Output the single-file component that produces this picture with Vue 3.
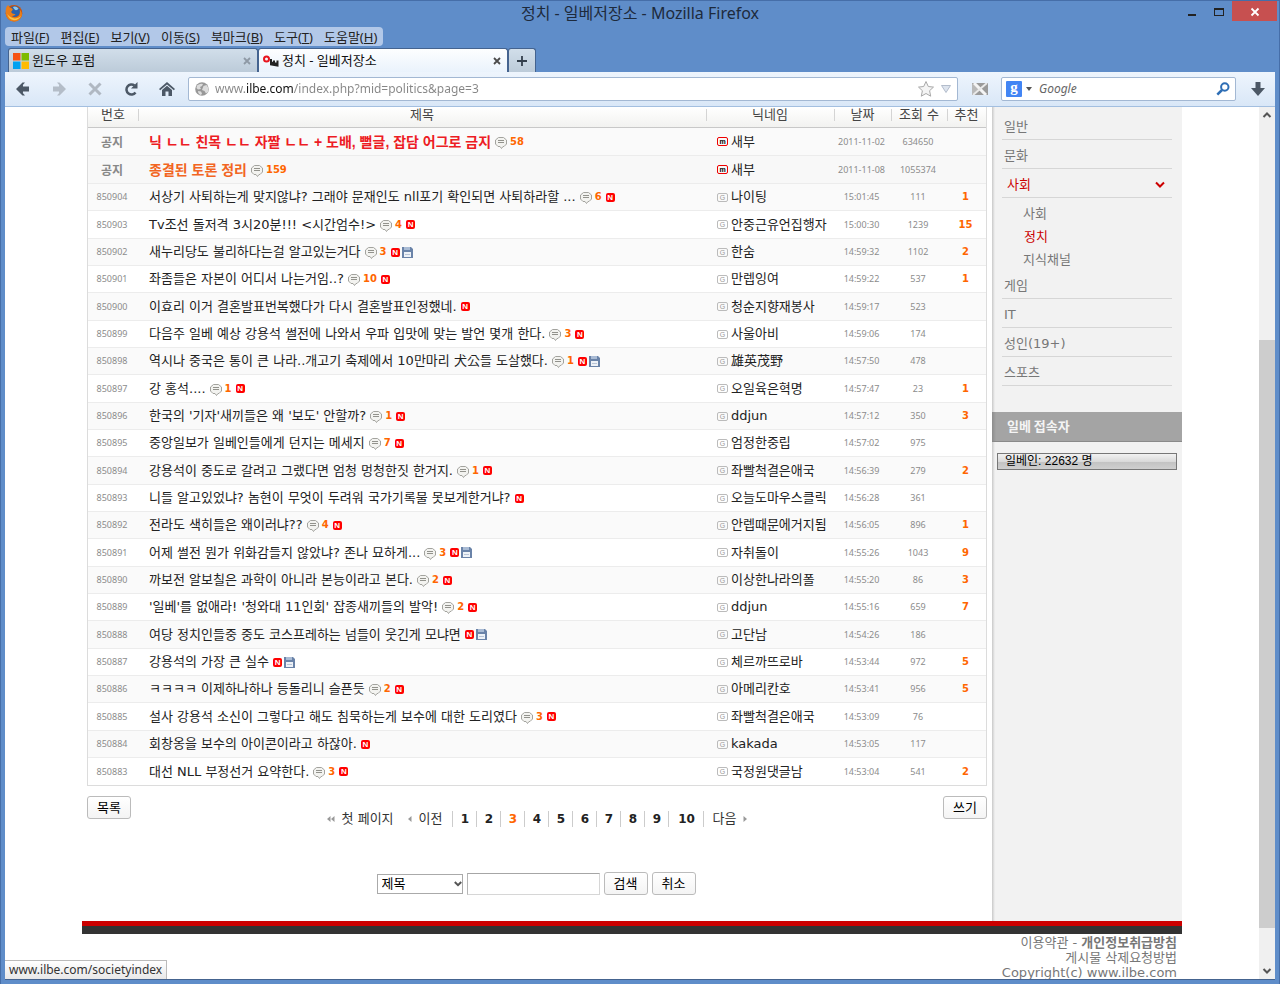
<script setup>
import { ref } from 'vue'

const menus = [
  ['파일', 'F'], ['편집', 'E'], ['보기', 'V'], ['이동', 'S'],
  ['북마크', 'B'], ['도구', 'T'], ['도움말', 'H'],
]
const address = ref('www.ilbe.com/index.php?mid=politics&page=3')

const posts = [
  { no: '공지', tone: 'red', title: '닉 ㄴㄴ 친목 ㄴㄴ 자짤 ㄴㄴ + 도배, 뻘글, 잡담 어그로 금지', comments: 58, nick: '새부', date: '2011-11-02', views: 634650 },
  { no: '공지', tone: 'orange', title: '종결된 토론 정리', comments: 159, nick: '새부', date: '2011-11-08', views: 1055374 },
  { no: 850904, title: '서상기 사퇴하는게 맞지않냐? 그래야 문재인도 nll포기 확인되면 사퇴하라할 ...', comments: 6, isNew: true, nick: '나이팅', date: '15:01:45', views: 111, votes: 1 },
  { no: 850903, title: 'Tv조선 돌저격 3시20분!!! <시간엄수!>', comments: 4, isNew: true, nick: '안중근유언집행자', date: '15:00:30', views: 1239, votes: 15 },
  { no: 850902, title: '새누리당도 불리하다는걸 알고있는거다', comments: 3, isNew: true, file: true, nick: '한숨', date: '14:59:32', views: 1102, votes: 2 },
  { no: 850901, title: '좌좀들은 자본이 어디서 나는거임..?', comments: 10, isNew: true, nick: '만렙잉여', date: '14:59:22', views: 537, votes: 1 },
  { no: 850900, title: '이효리 이거 결혼발표번복했다가 다시 결혼발표인정했네.', isNew: true, nick: '청순지향재봉사', date: '14:59:17', views: 523 },
  { no: 850899, title: '다음주 일베 예상 강용석 썰전에 나와서 우파 입맛에 맞는 발언 몇개 한다.', comments: 3, isNew: true, nick: '사울아비', date: '14:59:06', views: 174 },
  { no: 850898, title: '역시나 중국은 통이 큰 나라..개고기 축제에서 10만마리 犬公들 도살했다.', comments: 1, isNew: true, file: true, nick: '雄英茂野', date: '14:57:50', views: 478 },
  { no: 850897, title: '강 홍석....', comments: 1, isNew: true, nick: '오일육은혁명', date: '14:57:47', views: 23, votes: 1 },
  { no: 850896, title: "한국의 '기자'새끼들은 왜 '보도' 안할까?", comments: 1, isNew: true, nick: 'ddjun', date: '14:57:12', views: 350, votes: 3 },
  { no: 850895, title: '중앙일보가 일베인들에게 던지는 메세지', comments: 7, isNew: true, nick: '엄정한중립', date: '14:57:02', views: 975 },
  { no: 850894, title: '강용석이 중도로 갈려고 그랬다면 엄청 멍청한짓 한거지.', comments: 1, isNew: true, nick: '좌빨척결은애국', date: '14:56:39', views: 279, votes: 2 },
  { no: 850893, title: '니들 알고있었냐? 놈현이 무엇이 두려워 국가기록물 못보게한거냐?', isNew: true, nick: '오늘도마우스클릭', date: '14:56:28', views: 361 },
  { no: 850892, title: '전라도 색히들은 왜이러냐??', comments: 4, isNew: true, nick: '안렙때문에거지됨', date: '14:56:05', views: 896, votes: 1 },
  { no: 850891, title: '어제 썰전 뭔가 위화감들지 않았냐? 존나 묘하게...', comments: 3, isNew: true, file: true, nick: '자취돌이', date: '14:55:26', views: 1043, votes: 9 },
  { no: 850890, title: '까보전 알보칠은 과학이 아니라 본능이라고 본다.', comments: 2, isNew: true, nick: '이상한나라의폴', date: '14:55:20', views: 86, votes: 3 },
  { no: 850889, title: "'일베'를 없애라! '청와대 11인회' 잡종새끼들의 발악!", comments: 2, isNew: true, nick: 'ddjun', date: '14:55:16', views: 659, votes: 7 },
  { no: 850888, title: '여당 정치인들중 중도 코스프레하는 넘들이 웃긴게 모냐면', isNew: true, file: true, nick: '고단남', date: '14:54:26', views: 186 },
  { no: 850887, title: '강용석의 가장 큰 실수', isNew: true, file: true, nick: '체르까뜨로바', date: '14:53:44', views: 972, votes: 5 },
  { no: 850886, title: 'ㅋㅋㅋㅋ 이제하나하나 등돌리니 슬픈듯', comments: 2, isNew: true, nick: '아메리칸호', date: '14:53:41', views: 956, votes: 5 },
  { no: 850885, title: '설사 강용석 소신이 그렇다고 해도 침묵하는게 보수에 대한 도리였다', comments: 3, isNew: true, nick: '좌빨척결은애국', date: '14:53:09', views: 76 },
  { no: 850884, title: '회창옹을 보수의 아이콘이라고 하잖아.', isNew: true, nick: 'kakada', date: '14:53:05', views: 117 },
  { no: 850883, title: '대선 NLL 부정선거 요약한다.', comments: 3, isNew: true, nick: '국정원댓글남', date: '14:53:04', views: 541, votes: 2 },
]

const categories = [
  { name: '일반' },
  { name: '문화' },
  { name: '사회', open: true, children: ['사회', '정치', '지식채널'] },
  { name: '게임' },
  { name: 'IT' },
  { name: '성인(19+)' },
  { name: '스포츠' },
]
const pages = [1, 2, 3, 4, 5, 6, 7, 8, 9, 10]
const field = ref('제목')
const keyword = ref('')
</script>

<template>
  <div class="window">
    <header class="titlebar">
      <svg class="fox" viewBox="0 0 16 16" aria-hidden="true">
        <circle cx="8" cy="8.2" r="7.4" fill="#c9520c" />
        <circle cx="8.6" cy="6.6" r="4.9" fill="#2a62ac" />
        <path d="M7 2.6 Q10 1.6 12 4 Q11 6 9 5.4 Q8 4.4 7 2.6Z" fill="#8ec8ee" />
        <path d="M1 3.4 Q1.6 1.2 3 .8 Q3.2 2.6 4.6 3.4 Q6.4 3.6 7 4.8 Q6 6.4 5.4 7.2 Q6.6 9.4 9.4 8.8 Q8.4 11 5.8 10.6 Q8.8 13 12 10.6 Q13.8 8.6 13 5 Q15.6 7 15 10.4 Q13 15.6 8 15.6 Q1.6 15 .8 9 Q.4 5.6 1 3.4Z" fill="#ea7d18" />
        <path d="M2 8.6 Q3 13.6 8 14.4 Q12.4 14.2 14.2 10.6 Q11.4 13.4 7.6 12.6 Q3.6 11.6 2 8.6Z" fill="#fbc544" />
      </svg>
      <h1 class="window-title">정치 - 일베저장소 - Mozilla Firefox</h1>
      <div class="window-controls">
        <button class="win-btn" type="button" aria-label="최소화">
          <svg width="10" height="10" viewBox="0 0 10 10"><path d="M1 7h8v2H1z" fill="#222" /></svg>
        </button>
        <button class="win-btn" type="button" aria-label="최대화">
          <svg width="10" height="10" viewBox="0 0 10 10"><path d="M0 1h10v8H0zM1 3v5h8V3z" fill="#222" fill-rule="evenodd" /></svg>
        </button>
        <button class="win-btn close" type="button" aria-label="닫기">
          <svg width="10" height="10" viewBox="0 0 10 10"><path d="M1.500 1.500l7 7M8.500 1.500l-7 7" stroke="#fff" stroke-width="1.8" /></svg>
        </button>
      </div>
    </header>

    <nav class="menubar">
      <button v-for="m in menus" :key="m[1]" type="button">{{ m[0] }}(<u>{{ m[1] }}</u>)</button>
    </nav>

    <div class="tabs">
      <div class="tab">
        <svg width="16" height="16" viewBox="0 0 16 16" aria-hidden="true">
          <path d="M0 0h7.500v7.500H0z" fill="#f65314" /><path d="M8.500 0H16v7.500H8.500z" fill="#7cbb00" />
          <path d="M0 8.500h7.500V16H0z" fill="#00a1f1" /><path d="M8.500 8.500H16V16H8.500z" fill="#ffbb00" />
        </svg>
        <button class="tab-name" type="button">윈도우 포럼</button>
        <button class="tab-close faint" type="button" aria-label="탭 닫기">
          <svg width="8" height="8" viewBox="0 0 8 8"><path d="M1 1l6 6M7 1L1 7" stroke="currentColor" stroke-width="1.8" /></svg>
        </button>
      </div>
      <div class="tab active">
        <svg width="16" height="16" viewBox="0 0 16 16" aria-hidden="true">
          <circle cx="3.500" cy="6" r="2.500" fill="none" stroke="#e8141e" stroke-width="2" />
          <path d="M8 6v5.500l6.500 1V7.500M11 7.500v3.500M8 9.500l6 1" fill="none" stroke="#222" stroke-width="2" />
        </svg>
        <button class="tab-name" type="button">정치 - 일베저장소</button>
        <button class="tab-close" type="button" aria-label="탭 닫기">
          <svg width="8" height="8" viewBox="0 0 8 8"><path d="M1 1l6 6M7 1L1 7" stroke="currentColor" stroke-width="1.8" /></svg>
        </button>
      </div>
      <button class="new-tab" type="button" aria-label="새 탭">
        <svg width="10" height="10" viewBox="0 0 10 10"><path d="M5 0v10M0 5h10" stroke="#333f4c" stroke-width="1.8" /></svg>
      </button>
    </div>

    <div class="toolbar">
      <button class="tool" type="button" aria-label="뒤로">
        <svg width="14" height="14" viewBox="0 0 14 14"><path d="M0 7l6.500-6.500H9L5.500 4.500H13v5H5.500L9 13.500H6.500z" fill="#4c5866" /><path d="M2 7l5-4.500v9z" fill="#4c5866" /></svg>
      </button>
      <button class="tool" type="button" aria-label="앞으로">
        <svg width="14" height="14" viewBox="0 0 14 14"><path d="M14 7L7.500.5H5l3.500 4H1v5h7.500l-3.500 4h2.500z" fill="#b4bdc8" /><path d="M12 7L7 2.500v9z" fill="#b4bdc8" /></svg>
      </button>
      <button class="tool" type="button" aria-label="중지">
        <svg width="14" height="14" viewBox="0 0 14 14"><path d="M1.500 1.500l11 11M12.500 1.500l-11 11" stroke="#b0b8c2" stroke-width="3" /></svg>
      </button>
      <button class="tool" type="button" aria-label="새로 고침">
        <svg width="14" height="14" viewBox="0 0 14 14"><path d="M11.500 10.500A5 5 0 1 1 10.500 3.500" fill="none" stroke="#4c5866" stroke-width="2.500" /><path d="M13.500 0v6.500H7z" fill="#4c5866" /></svg>
      </button>
      <button class="tool" type="button" aria-label="홈">
        <svg width="16" height="14" viewBox="0 0 16 14"><path d="M8 0l8 7-1.200 1.300L8 2.500 1.200 8.300 0 7z" fill="#4c5866" /><path d="M3 8l5-4.200L13 8v6H9.500V9.500h-3V14H3z" fill="#4c5866" /></svg>
      </button>
      <div class="url-box">
        <svg width="14" height="14" viewBox="0 0 14 14" aria-hidden="true">
          <circle cx="7" cy="7" r="6.800" fill="#989898" />
          <path d="M2 3.500Q5 1 8 2L7 4 5 5 6 7 3 7.500 1.500 6zM8.500 4l3-1 2 3-.5 4-2 1.500L9.500 9 7 8zM3 9l3 .5 1 2-1 1.500Q3 12 3 9z" fill="#dcdcdc" />
        </svg>
        <input id="address" v-model="address" class="address" type="text" aria-label="주소">
        <svg width="18" height="18" viewBox="0 0 18 18" aria-hidden="true">
          <path d="M9 1.500l2.300 5 5.200.6-3.900 3.600 1.100 5.500L9 13.500l-4.700 2.700 1.100-5.500L1.500 7.100l5.200-.6z" fill="#f4f4f4" stroke="#a9a9a9" />
        </svg>
        <svg width="10" height="8" viewBox="0 0 10 8" aria-hidden="true"><path d="M.5.500h9L5 7.500z" fill="#dde4ee" stroke="#b3bccb" /></svg>
      </div>
      <button class="tool addon" type="button" aria-label="부가 기능">
        <svg width="16" height="12" viewBox="0 0 16 12"><path d="M0 0h16v12H0z" fill="#9a9a9a" /><path d="M0 0l7 6-7 6z" fill="#b9b9b9" /><path d="M2 0L14 12" stroke="#f4f4f4" stroke-width="3" /><path d="M15 0L1 12" stroke="#e9e9e9" stroke-width="2" /></svg>
      </button>
      <div class="search-box">
        <span class="google">g</span>
        <svg width="6" height="4" viewBox="0 0 6 4" aria-hidden="true"><path d="M0 0h6L3 4z" fill="#555" /></svg>
        <input class="search-input" type="text" placeholder="Google" aria-label="Google">
        <svg width="14" height="14" viewBox="0 0 14 14" aria-hidden="true"><circle cx="8.800" cy="5" r="3.700" fill="none" stroke="#2e6eb5" stroke-width="2" /><path d="M6 8l-4.700 4.700" stroke="#2e6eb5" stroke-width="2.500" /></svg>
      </div>
      <button class="tool down" type="button" aria-label="다운로드">
        <svg width="14" height="14" viewBox="0 0 14 14"><path d="M4.500 0h5v6H14l-7 8-7-8h4.500z" fill="#4c5866" /></svg>
      </button>
    </div>

    <div class="viewport">
      <div class="page">
        <div class="site">
          <div class="columns">
            <main class="board">
              <table class="posts">
                <thead>
                  <tr>
                    <th class="c-no">번호</th>
                    <th>제목</th>
                    <th class="c-nick">닉네임</th>
                    <th class="c-date">날짜</th>
                    <th class="c-views">조회 수</th>
                    <th class="c-votes">추천</th>
                  </tr>
                </thead>
                <tbody>
                  <tr v-for="(p, i) in posts" :key="i" :class="{ notice: p.tone }">
                    <td class="no">{{ p.no }}</td>
                    <td>
                      <div class="subject">
                        <a href="#" class="title" :class="p.tone">{{ p.title }}</a>
                        <template v-if="p.comments">
                          <svg class="bubble" width="12" height="12" viewBox="0 0 12 12" aria-hidden="true">
                            <path d="M3.500.500h5l3 2.500v4L9 9.500H8L6.500 11.500 5 9.500H3L.500 7V3z" fill="#f3f3f0" stroke="#a3a39e" />
                            <path d="M3 3.500h6M3 5.500h6" stroke="#92928c" />
                          </svg>
                          <b class="count">{{ p.comments }}</b>
                        </template>
                        <span v-if="p.isNew" class="new">N</span>
                        <svg v-if="p.file" class="disk" width="11" height="11" viewBox="0 0 11 11" aria-hidden="true">
                          <path d="M0 0h9l2 2v9H0z" fill="#6a83a8" /><path d="M2 0h6v3H2z" fill="#a9bbd4" /><path d="M2 5h7v5H2z" fill="#eef2f7" /><path d="M3 7h5v1H3z" fill="#b8c4d6" />
                        </svg>
                      </div>
                    </td>
                    <td>
                      <div class="nick">
                        <span class="badge" :class="{ staff: p.tone }">{{ p.tone ? 'm' : 'G' }}</span>
                        <a href="#">{{ p.nick }}</a>
                      </div>
                    </td>
                    <td class="num">{{ p.date }}</td>
                    <td class="num">{{ p.views }}</td>
                    <td class="votes">{{ p.votes }}</td>
                  </tr>
                </tbody>
              </table>

              <div class="under">
                <button class="btn" type="button">목록</button>
                <nav class="pager">
                  <a href="#" class="edge"><svg width="8" height="6" viewBox="0 0 8 6"><path d="M3.500 0v6L0 3zM7.500 0v6L4 3z" fill="#999" /></svg>첫 페이지</a>
                  <a href="#" class="edge prev"><svg width="4" height="6" viewBox="0 0 4 6"><path d="M3.500 0v6L0 3z" fill="#999" /></svg>이전</a>
                  <a v-for="n in pages" :key="n" href="#" class="page-no" :class="{ current: n === 3 }">{{ n }}</a>
                  <a href="#" class="edge next">다음<svg width="4" height="6" viewBox="0 0 4 6"><path d="M.5 0v6L4 3z" fill="#999" /></svg></a>
                </nav>
                <button class="btn" type="button">쓰기</button>
              </div>

              <form class="find" @submit.prevent>
                <span class="select-wrap">
                  <select v-model="field" aria-label="검색 대상">
                    <option>제목</option>
                    <option>내용</option>
                  </select>
                  <svg width="8" height="6" viewBox="0 0 8 6" aria-hidden="true"><path d="M.8 1L4 4.200 7.200 1" fill="none" stroke="#555" stroke-width="2" /></svg>
                </span>
                <input v-model="keyword" class="keyword" type="text" aria-label="검색어">
                <button class="btn" type="submit">검색</button>
                <button class="btn" type="button">취소</button>
              </form>
            </main>

            <aside class="side">
              <ul class="cats">
                <li v-for="c in categories" :key="c.name">
                  <a href="#" class="cat" :class="{ open: c.open }">
                    {{ c.name }}
                    <svg v-if="c.open" width="10" height="8" viewBox="0 0 10 8" aria-hidden="true"><path d="M1 1.500L5 5.500 9 1.500" fill="none" stroke="#c00" stroke-width="2" /></svg>
                  </a>
                  <ul v-if="c.children" class="subs">
                    <li v-for="s in c.children" :key="s"><a href="#" :class="{ here: s === '정치' }">{{ s }}</a></li>
                  </ul>
                </li>
              </ul>
              <h2 class="side-title">일베 접속자</h2>
              <div class="online">일베인: 22632 명</div>
            </aside>
          </div>

          <footer class="foot">
            <p><a href="#">이용약관</a> - <a href="#"><b>개인정보취급방침</b></a></p>
            <p><a href="#">게시물 삭제요청방법</a></p>
            <p>Copyright(c) www.ilbe.com</p>
          </footer>
        </div>
        <div class="status">www.ilbe.com/societyindex</div>
      </div>

      <div class="scrollbar" aria-hidden="true">
        <svg width="16" height="16" viewBox="0 0 16 16"><path d="M4.500 10L8 6.500l3.500 3.500" fill="none" stroke="#555" stroke-width="2" /></svg>
        <div class="track"><div class="thumb"></div></div>
        <svg width="16" height="16" viewBox="0 0 16 16"><path d="M4.500 6L8 9.500 11.500 6" fill="none" stroke="#555" stroke-width="2" /></svg>
      </div>
    </div>
  </div>
</template>

<style>
body {
  margin: 0;
  background: #5f8dc9;
}
</style>

<style scoped>
* {
  box-sizing: border-box;
}

.window {
  display: flex;
  flex-direction: column;
  height: 100vh;
  padding: 0 4px 4px;
  border: 1px solid #466ea8;
  border-width: 1px 1px 0;
  background: #5f8dc9;
  font: 13px/16px "DejaVu Sans", "Noto Sans CJK KR", sans-serif;
  color: #222;
}

button {
  margin: 0;
  padding: 0;
  border: 0;
  background: none;
  color: inherit;
  font: inherit;
}

a {
  color: inherit;
  text-decoration: none;
}

ul, p, h1, h2 {
  margin: 0;
  padding: 0;
  list-style: none;
}

svg {
  display: block;
  flex: none;
}

.titlebar, .menubar, .tabs, .toolbar, .status {
  flex: none;
  font-family: "Noto Sans", "Noto Sans CJK KR", sans-serif;
}

/* Title bar */
.titlebar {
  display: grid;
  grid-template-columns: 1fr auto 1fr;
  height: 26px;
}

.fox {
  width: 18px;
  height: 18px;
  margin-top: 3px;
}

.window-title {
  font-size: 16px;
  font-weight: 400;
  line-height: 24px;
  color: #1d2a3c;
}

.window-controls {
  display: flex;
  justify-content: flex-end;
  height: 20px;
  margin-right: -2px;
}

.win-btn {
  display: flex;
  align-items: center;
  justify-content: center;
  width: 27px;
  padding-top: 1px;
}

.win-btn.close {
  width: 45px;
  background: #c75050;
}

/* Menu bar */
.menubar {
  display: flex;
  align-self: flex-start;
  gap: 11px;
  height: 19px;
  margin-bottom: 2px;
  padding: 0 6px;
  border-radius: 4px;
  background: #b2c8e8;
  line-height: 18px;
}

/* Tabs */
.tabs {
  display: flex;
  height: 24px;
  padding-left: 3px;
}

.tab {
  display: flex;
  align-items: center;
  gap: 3px;
  flex: 0 1 250px;
  padding: 0 6px 0 4px;
  border: 1px solid #44638f;
  border-bottom: 0;
  border-radius: 3px 3px 0 0;
  background: linear-gradient(#d1deea, #bccbd9);
}

.tab.active {
  background: linear-gradient(#fdfeff, #eaf3fc);
}

.tab-name {
  flex: 1;
  text-align: left;
  line-height: 18px;
  padding-bottom: 2px;
  color: #111;
}

.tab-close {
  color: #4b4b4b;
}

.tab-close.faint {
  color: #8e99a5;
}

.new-tab {
  display: flex;
  align-items: center;
  justify-content: center;
  width: 28px;
  border: 1px solid #44638f;
  border-bottom: 0;
  border-radius: 3px 3px 0 0;
  background: linear-gradient(#d1deea, #bccbd9);
}

/* Toolbar */
.toolbar {
  display: flex;
  align-items: center;
  height: 35px;
  padding: 0 10px 0 0;
  border-bottom: 1px solid #a3bfe0;
  background: linear-gradient(#eef5fd, #d9e7f7);
}

.tool {
  display: flex;
  align-items: center;
  justify-content: center;
  width: 36px;
  height: 24px;
}

.tool.addon {
  width: 43px;
}

.tool.down {
  width: 14px;
  margin-left: 15px;
}

.url-box, .search-box {
  display: flex;
  align-items: center;
  min-width: 0;
  height: 24px;
  border: 1px solid #a3b8d3;
  border-radius: 2px;
  background: #fff;
}

.url-box {
  flex: 1;
  gap: 6px;
  margin-left: 3px;
  padding: 0 6px;
}

.search-box {
  flex: 0 1 235px;
  gap: 4px;
  padding: 0 5px 0 4px;
}

.address, .search-input {
  flex: 1;
  min-width: 0;
  padding: 0;
  border: 0;
  outline: 0;
  background: none;
  font: 12px/20px "Noto Sans", sans-serif;
}

/* The host name stands out from the rest of the address */
.address {
  background: linear-gradient(90deg, #868686 32px, #111 32px, #111 79px, #868686 79px);
  background-clip: text;
  color: transparent;
}

.search-input {
  margin-left: 3px;
}

.search-input::placeholder {
  color: #666;
  font-style: italic;
  opacity: 1;
}

.google {
  width: 16px;
  height: 16px;
  border-radius: 1px;
  background: #4285f4;
  color: #fff;
  font: 700 15px/12px "Liberation Serif", serif;
  text-align: center;
}

/* Page area */
.viewport {
  display: flex;
  flex: 1;
  min-height: 0;
  border-bottom: 1px solid #44638f;
  background: #fff;
}

.page {
  position: relative;
  flex: 1;
  min-width: 0;
  overflow: hidden;
}

.site {
  max-width: 1100px;
  margin: 0 auto;
}

.columns {
  display: flex;
  border-bottom: 8px solid #333;
}

.board {
  flex: 1;
  min-width: 0;
  padding: 0 5px 26px;
  border-bottom: 5px solid #c00;
}

/* Post list */
.posts {
  width: 100%;
  border: 1px solid #dcdcdc;
  border-top: 0;
  border-collapse: separate;
  border-spacing: 0;
  table-layout: fixed;
}

.posts th {
  height: 21px;
  padding: 0 0 4px;
  border-bottom: 1px solid #c8c8c8;
  background: linear-gradient(90deg, #d4d4d4 1px, transparent 1px) 0 2px / 100% 12px no-repeat, linear-gradient(#fff, #f2f2f0);
  color: #444;
  font-weight: 400;
  line-height: 16px;
}

.posts th:first-child {
  background: linear-gradient(#fff, #f2f2f0);
}

.c-no { width: 50px; }
.c-nick { width: 128px; }
.c-date { width: 57px; }
.c-views { width: 56px; }
.c-votes { width: 39px; }

.posts td {
  height: 27px;
  padding: 0;
  border-bottom: 1px solid #ececec;
  white-space: nowrap;
}

.posts tr:nth-child(3n + 1) td, .posts .notice td {
  height: 28px;
}

.posts tr:last-child td {
  border-bottom: 0;
}

.posts tbody tr:nth-child(odd) td {
  background: #fafafa;
}

.posts tbody .notice td {
  background: #f8f8f8;
}

.posts .no, .posts .num {
  padding-right: 2px;
  color: #8c8c8c;
  font: 9px/16px "Noto Sans", sans-serif;
  text-align: center;
}

.posts .notice .no {
  color: #888;
  font: 700 12px/16px "Noto Sans CJK KR", sans-serif;
}

.votes {
  color: #ff6600;
  font-size: 10px;
  font-weight: 700;
  text-align: center;
}

.posts .votes {
  padding-right: 2px;
}

.subject {
  display: flex;
  align-items: center;
  padding-left: 11px;
}

.title {
  margin-right: 4px;
}

.title.red, .title.orange {
  font-family: "Liberation Sans", "Noto Sans CJK KR", sans-serif;
  font-size: 14px;
  font-weight: 700;
}

.title.red { color: #ed1c24; }
.title.orange { color: #f26522; }

.bubble {
  margin: 2px 3px 0 0;
}

.count {
  margin-right: 4px;
  color: #ff6600;
  font-size: 10px;
}

.new {
  width: 9px;
  height: 9px;
  margin-right: 2px;
  border-radius: 2px;
  background: #f00;
  color: #fff;
  font: 700 8px/9px "Liberation Sans", sans-serif;
  text-align: center;
}

.nick {
  display: flex;
  align-items: center;
  gap: 3px;
  padding-left: 11px;
}

.badge {
  width: 11px;
  height: 9px;
  border: 1px solid #bbb;
  border-radius: 2px;
  color: #999;
  font: 7px/7px "Liberation Sans", sans-serif;
  text-align: center;
}

.badge.staff {
  border-color: #e00;
  color: #000;
  font-weight: 700;
}

/* Buttons, pager and search form */
.btn {
  width: 44px;
  height: 23px;
  border: 1px solid #bbb;
  border-radius: 3px;
  background: linear-gradient(#fff, #f4f4f4);
  color: #000;
  line-height: 19px;
}

.under {
  display: flex;
  justify-content: space-between;
  align-items: flex-start;
  margin-top: 10px;
}

.pager {
  display: flex;
  align-items: center;
  margin-top: 15px;
}

.edge {
  display: flex;
  align-items: center;
  gap: 7px;
  color: #333;
}

.edge.prev {
  margin: 0 10px 0 14px;
}

.edge.next {
  padding-left: 8px;
  border-left: 1px solid #ccc;
}

.page-no {
  width: 24px;
  border-left: 1px solid #ccc;
  font-size: 12px;
  font-weight: 700;
  text-align: center;
}

.page-no:nth-last-child(2) {
  width: 35px;
}

.page-no.current {
  color: #ff6600;
}

.find {
  display: flex;
  justify-content: center;
  align-items: center;
  gap: 4px;
  margin: 45px 2px 0 0;
}

.select-wrap {
  display: flex;
  align-items: center;
  width: 86px;
  height: 20px;
  border: 1px solid #aaa;
}

.select-wrap select {
  flex: 1;
  height: 18px;
  margin-right: -20px;
  padding: 0 0 0 4px;
  border: 0;
  outline: 0;
  appearance: none;
  background: none;
  color: #000;
  font: inherit;
}

.select-wrap svg {
  margin-left: 8px;
  pointer-events: none;
}

.keyword {
  width: 133px;
  height: 22px;
  border: 1px solid #d6d6d6;
  border-top-color: #a6a6a6;
  border-left-color: #b6b6b6;
  outline: 0;
}

/* Sidebar */
.side {
  width: 190px;
  border-bottom: 5px solid #c00;
  background: linear-gradient(90deg, #c9c9c9, #e4e4e4 2px, #f2f2f2 3px);
  color: #777;
}

.cats {
  padding: 4px 10px 0;
}

.cat {
  display: flex;
  align-items: center;
  justify-content: space-between;
  height: 29px;
  padding: 3px 7px 0 2px;
  border-bottom: 1px solid #d6d6d6;
}

.cat.open {
  padding-left: 5px;
  color: #c00;
}

.subs {
  padding: 4px 0 0 21px;
}

.subs li {
  height: 23px;
  line-height: 23px;
}

.subs li:last-child {
  height: 22px;
}

.here {
  padding-left: 1px;
  color: #c00;
}

.side-title {
  height: 30px;
  margin-top: 26px;
  padding-left: 15px;
  border-bottom: 1px solid #8a8a8a;
  background: linear-gradient(90deg, #8c8c8c, #a4a4a4 4px);
  color: #f4f4f4;
  font: 700 13px/28px "Noto Sans CJK KR", sans-serif;
}

.online {
  height: 17px;
  margin: 11px 5px 0;
  padding-left: 7px;
  border: 1px solid #777;
  background: linear-gradient(#f2f2f2, #dadada 50%, #c2c2c2 51%, #cfcfcf);
  color: #000;
  font: 12px/15px "Liberation Sans", "Noto Sans CJK KR", sans-serif;
}

/* Footer, status label and scroll bar */
.foot {
  padding: 1px 5px 0;
  color: #777;
  line-height: 15px;
  text-align: right;
}

.status {
  position: absolute;
  bottom: 0;
  left: 0;
  height: 19px;
  padding: 0 4px;
  border: 1px solid #bbb;
  border-width: 1px 1px 0 0;
  background: linear-gradient(#fff, #e8e8e8);
  color: #333;
  font-size: 12px;
  line-height: 18px;
}

.scrollbar {
  display: flex;
  flex-direction: column;
  width: 16px;
  background: #f0f0f0;
}

.track {
  display: flex;
  flex: 1;
  flex-direction: column;
  justify-content: flex-end;
  padding-bottom: 35px;
}

.thumb {
  height: 73%;
  background: #cdcdcd;
}
</style>
